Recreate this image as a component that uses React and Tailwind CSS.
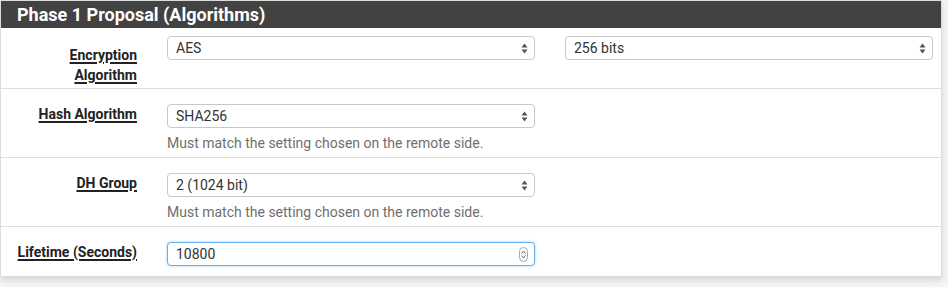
import React from 'react';

const font = { fontFamily: 'Roboto, "Liberation Sans", sans-serif' };

const Arrows = () => (
    <svg width="7" height="11" viewBox="0 0 7 11" className="shrink-0">
        <path d="M3.5 0.5 L6.5 4.5 L0.5 4.5 Z" fill="#555" />
        <path d="M3.5 10.5 L6.5 6.5 L0.5 6.5 Z" fill="#555" />
    </svg>
);

const Select = ({ value }) => (
    <div className="w-[368px] h-[24px] border border-[#c8c8c8] rounded-[4px] bg-white flex items-center justify-between pl-[8px] pr-[6px] text-[14px] text-[#333]">
        <span>{value}</span>
        <Arrows />
    </div>
);

const Spinner = () => (
    <div className="w-[9px] h-[15px] border border-[#aaa] rounded-full flex flex-col items-center justify-center gap-[1px]">
        <svg width="5" height="4" viewBox="0 0 5 4"><path d="M0.5 3.5 L2.5 1 L4.5 3.5" stroke="#666" fill="none" strokeWidth="1" /></svg>
        <svg width="5" height="4" viewBox="0 0 5 4"><path d="M0.5 0.5 L2.5 3 L4.5 0.5" stroke="#666" fill="none" strokeWidth="1" /></svg>
    </div>
);

const Label = ({ children, top = 'pt-0' }) => (
    <div className={`w-[151px] shrink-0 pr-[15px] text-right text-[14px] font-bold text-[#222] leading-[20px] ${top}`}>
        {children}
    </div>
);

const U = ({ children }) => (
    <span className="underline decoration-[1.5px] underline-offset-[2px] whitespace-nowrap">{children}</span>
);

const Hint = () => (
    <div className="text-[14px] text-[#6f6f6f] mt-[7px] leading-[17px]">Must match the setting chosen on the remote side.</div>
);

export default function App() {
    return (
        <div className="w-[948px] h-[287px] bg-[#f4f4f4]" style={font}>
            <div className="w-[942px] border border-[#dcdcdc] bg-white shadow-[0_3px_6px_rgba(0,0,0,0.12)]">
                {/* Header */}
                <div className="h-[27px] bg-[#424242] text-white font-bold text-[18px] pl-[16px] flex items-center">
                    Phase 1 Proposal (Algorithms)
                </div>

                {/* Encryption Algorithm */}
                <div className="flex h-[61px] pt-[8px] border-b border-[#dedede]">
                    <Label top="pt-[9px]">
                        <div className="flex flex-col items-end">
                            <U>Encryption</U>
                            <U>Algorithm</U>
                        </div>
                    </Label>
                    <div className="pl-[15px]">
                        <Select value="AES" />
                    </div>
                    <div className="pl-[30px]">
                        <Select value="256 bits" />
                    </div>
                </div>

                {/* Hash Algorithm */}
                <div className="flex h-[69px] pt-[15px] border-b border-[#dedede]">
                    <Label>
                        <U>Hash Algorithm</U>
                    </Label>
                    <div className="pl-[15px]">
                        <Select value="SHA256" />
                        <Hint />
                    </div>
                </div>

                {/* DH Group */}
                <div className="flex h-[69px] pt-[15px] border-b border-[#dedede]">
                    <Label>
                        <U>DH Group</U>
                    </Label>
                    <div className="pl-[15px]">
                        <Select value="2 (1024 bit)" />
                        <Hint />
                    </div>
                </div>

                {/* Lifetime */}
                <div className="flex h-[49px] pt-[15px]">
                    <Label>
                        <U>Lifetime (Seconds)</U>
                    </Label>
                    <div className="pl-[15px]">
                        <div className="w-[368px] h-[24px] border border-[#66afe9] rounded-[4px] bg-white flex items-center justify-between pl-[8px] pr-[6px] text-[14px] text-[#333] shadow-[0_0_3px_rgba(102,175,233,0.6)]">
                            <span>10800</span>
                            <Spinner />
                        </div>
                    </div>
                </div>
            </div>
        </div>
    );
}
